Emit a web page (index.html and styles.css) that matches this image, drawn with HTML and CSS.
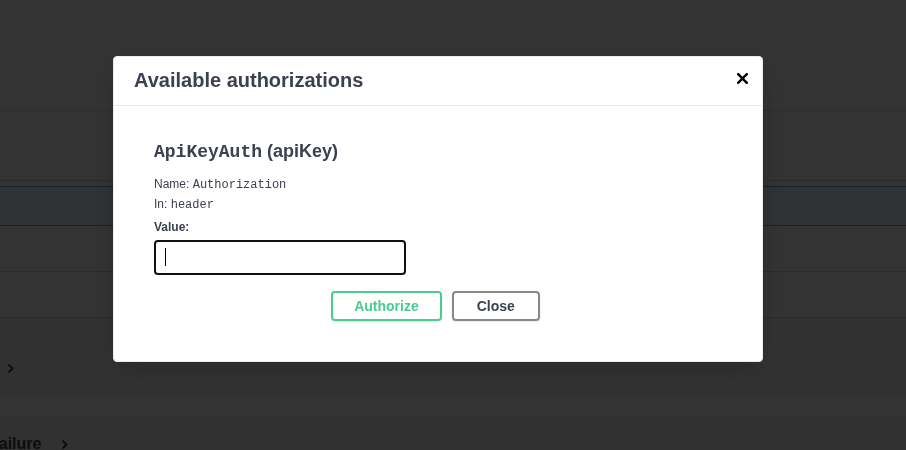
FILE: index.html
```html
<!DOCTYPE html>
<html lang="en">
<head>
<meta charset="utf-8">
<title>Available authorizations</title>
<link rel="stylesheet" href="styles.css">
</head>
<body>
<div class="page">
  <div class="info"></div>
  <div class="section"></div>
  <div class="op op-get"></div>
  <div class="op-row"></div>
  <div class="op-row"></div>
  <div class="tag">
    <svg class="chev" width="7" height="11" viewBox="0 0 7 11"><polyline points="1.5,1.5 5.5,5.5 1.5,9.5" fill="none" stroke="#3b4151" stroke-width="2"/></svg>
  </div>
  <div class="spacer"></div>
  <div class="tag tag-failure">
    <span class="tag-name">Failure</span>
    <svg class="chev" width="7" height="11" viewBox="0 0 7 11"><polyline points="1.5,1.5 5.5,5.5 1.5,9.5" fill="none" stroke="#3b4151" stroke-width="2"/></svg>
  </div>
</div>

<div class="backdrop">
  <div class="modal">
    <div class="modal-header">
      <h3 class="modal-title">Available authorizations</h3>
      <button class="close-x" aria-label="Close">
        <svg width="11" height="11" viewBox="0 0 11 11"><path d="M1.2 1.2 L9.8 9.8 M9.8 1.2 L1.2 9.8" stroke="#000" stroke-width="2.4" stroke-linecap="square"/></svg>
      </button>
    </div>
    <div class="modal-body">
      <h4 class="scheme"><code>ApiKeyAuth</code> (apiKey)</h4>
      <p class="meta first">Name: <code>Authorization</code></p>
      <p class="meta">In: <code>header</code></p>
      <label class="value-label">Value:</label>
      <div class="value-input"><span class="caret"></span></div>
      <div class="btn-wrapper">
        <button class="btn btn-auth">Authorize</button>
        <button class="btn btn-close">Close</button>
      </div>
    </div>
  </div>
</div>
</body>
</html>
```
FILE: styles.css
```css
html, body {
  margin: 0;
  padding: 0;
}
body {
  background: #fff;
  font-family: "Liberation Sans", Arial, sans-serif;
  color: #3b4151;
  width: 906px;
  height: 450px;
  overflow: hidden;
}

/* underlying page */
.page {
  display: flex;
  flex-direction: column;
}
.info {
  height: 110px;
  border-bottom: 1px solid #e8e8e8;
}
.section {
  height: 69px;
  border-bottom: 1px solid #dcdcdc;
  margin-bottom: 5px;
}
.op-get {
  height: 38px;
  border-top: 1px solid #7aa6d6;
  border-bottom: 1px solid #7aa6d6;
  background: #f5f9ff;
}
.op-row {
  height: 45px;
  border-bottom: 1px solid #d9d9d9;
}
.tag {
  height: 77px;
  background: #f6f6f6;
  display: flex;
  align-items: center;
  padding-left: 7px;
  padding-top: 24px;
  box-sizing: border-box;
}
.spacer {
  height: 20px;
}
.tag-failure {
  height: 40px;
  padding-top: 18px;
  padding-left: 0;
  gap: 20px;
}
.tag-name {
  font-size: 16px;
  font-weight: 700;
  margin-left: -11px;
  color: #3b4151;
}

/* overlay + modal */
.backdrop {
  position: fixed;
  inset: 0;
  background: rgba(0, 0, 0, 0.8);
}
.modal {
  position: absolute;
  top: 56px;
  left: 113px;
  width: 650px;
  box-sizing: border-box;
  background: #fff;
  border: 1px solid #ebebeb;
  border-radius: 4px;
  box-shadow: 0 10px 30px -2px rgba(0, 0, 0, 0.2);
}
.modal-header {
  height: 49px;
  box-sizing: border-box;
  border-bottom: 1px solid #ebebeb;
  display: flex;
  align-items: center;
  justify-content: space-between;
  padding: 0 14px 0 20px;
}
.modal-title {
  margin: 0 0 2px;
  font-size: 20px;
  line-height: 23px;
  font-weight: 700;
  color: #3b4151;
}
.close-x {
  border: 0;
  background: none;
  padding: 0;
  width: 11px;
  height: 11px;
  margin-bottom: 5px;
  display: flex;
}
.modal-body {
  padding: 34px 40px 40px;
}
.scheme {
  margin: 0;
  font-size: 18px;
  line-height: 22px;
  font-weight: 700;
  color: #3b4151;
}
.scheme code {
  font-family: "Liberation Mono", "Courier New", monospace;
  font-size: 18px;
  font-weight: 700;
  line-height: 1;
}
.meta {
  margin: 0;
  height: 20px;
  font-size: 12px;
  line-height: 20px;
  color: #3b4151;
}
.meta.first {
  margin-top: 12px;
}
.meta code {
  font-family: "Liberation Mono", "Courier New", monospace;
  font-size: 12px;
  line-height: 1;
}
.value-label {
  display: block;
  margin-top: 3px;
  font-size: 12px;
  line-height: 20px;
  font-weight: 700;
}
.value-input {
  margin-top: 3px;
  width: 252px;
  height: 35px;
  box-sizing: border-box;
  border: 2px solid #111;
  border-radius: 4px;
  padding: 6px 0 0 9px;
}
.caret {
  display: block;
  width: 1px;
  height: 18px;
  background: #000;
}
.btn-wrapper {
  margin-top: 16px;
  display: flex;
  justify-content: center;
  gap: 10px;
  padding-right: 5px;
}
.btn {
  font-family: "Liberation Sans", Arial, sans-serif;
  font-size: 14px;
  font-weight: 700;
  line-height: 16px;
  padding: 5px 23px;
  border-radius: 4px;
  background: transparent;
  border: 2px solid #888;
  color: #3b4151;
  box-shadow: 0 1px 2px rgba(0, 0, 0, 0.1);
}
.btn-auth {
  border-color: #49cc90;
  color: #49cc90;
  padding: 5px 21px;
}
```
